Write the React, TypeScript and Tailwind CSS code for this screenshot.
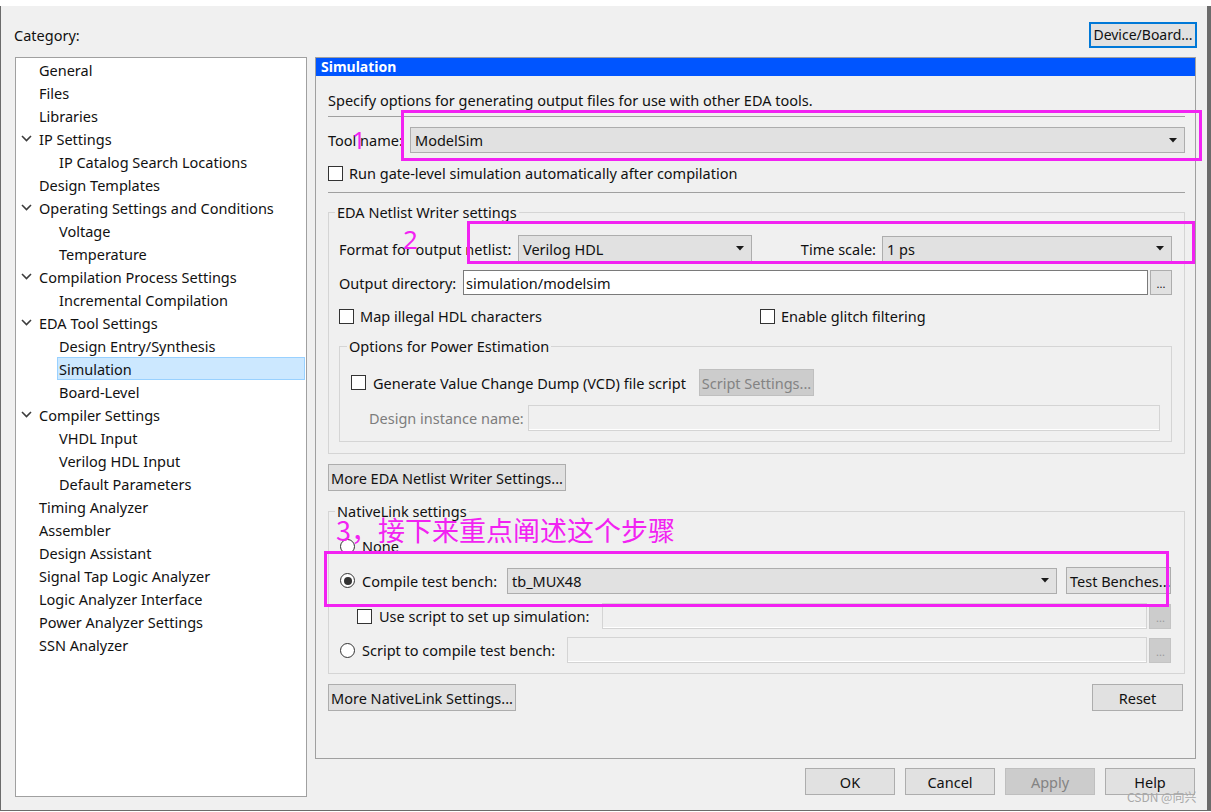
import React from "react";

type TreeItem = { label: string; level: 0 | 1; open?: boolean; selected?: boolean };

const tree: TreeItem[] = [
  { label: "General", level: 0 },
  { label: "Files", level: 0 },
  { label: "Libraries", level: 0 },
  { label: "IP Settings", level: 0, open: true },
  { label: "IP Catalog Search Locations", level: 1 },
  { label: "Design Templates", level: 0 },
  { label: "Operating Settings and Conditions", level: 0, open: true },
  { label: "Voltage", level: 1 },
  { label: "Temperature", level: 1 },
  { label: "Compilation Process Settings", level: 0, open: true },
  { label: "Incremental Compilation", level: 1 },
  { label: "EDA Tool Settings", level: 0, open: true },
  { label: "Design Entry/Synthesis", level: 1 },
  { label: "Simulation", level: 1, selected: true },
  { label: "Board-Level", level: 1 },
  { label: "Compiler Settings", level: 0, open: true },
  { label: "VHDL Input", level: 1 },
  { label: "Verilog HDL Input", level: 1 },
  { label: "Default Parameters", level: 1 },
  { label: "Timing Analyzer", level: 0 },
  { label: "Assembler", level: 0 },
  { label: "Design Assistant", level: 0 },
  { label: "Signal Tap Logic Analyzer", level: 0 },
  { label: "Logic Analyzer Interface", level: 0 },
  { label: "Power Analyzer Settings", level: 0 },
  { label: "SSN Analyzer", level: 0 },
];

function Chevron() {
  return (
    <svg width="11" height="7" viewBox="0 0 11 7" aria-hidden>
      <path d="M1 1 L5.5 5.5 L10 1" fill="none" stroke="#3c3c3c" strokeWidth="1.6" />
    </svg>
  );
}

function Caret() {
  return (
    <svg width="8" height="5" viewBox="0 0 8 5" aria-hidden>
      <path d="M0 0 H8 L4 4.5 Z" fill="#1a1a1a" />
    </svg>
  );
}

function Combo({ value, className = "" }: { value: string; className?: string }) {
  return (
    <div
      className={`flex h-[26px] items-center justify-between border border-[#adadad] bg-[#e1e1e1] pl-[4px] pr-[7px] ${className}`}
    >
      <span>{value}</span>
      <Caret />
    </div>
  );
}

function Check() {
  return <span className="block h-[15px] w-[15px] shrink-0 border border-[#333] bg-white" />;
}

function Radio({ on = false }: { on?: boolean }) {
  return (
    <span className="grid h-[15px] w-[15px] shrink-0 place-items-center rounded-full border border-[#333] bg-white">
      {on ? <span className="block h-[8px] w-[8px] rounded-full bg-[#333]" /> : null}
    </span>
  );
}

function Btn({ children, className = "", disabled = false }: { children: React.ReactNode; className?: string; disabled?: boolean }) {
  return (
    <div
      className={`flex h-[27px] items-center justify-center whitespace-nowrap border ${
        disabled ? "border-[#bfbfbf] bg-[#cccccc] text-[#838383]" : "border-[#adadad] bg-[#e1e1e1]"
      } ${className}`}
    >
      {children}
    </div>
  );
}

function Dots({ disabled = false }: { disabled?: boolean }) {
  return (
    <div
      className={`ml-[2px] flex h-[25px] w-[22px] shrink-0 items-end justify-center border pb-[5px] text-[11px] leading-none ${
        disabled ? "border-[#c4c4c4] bg-[#cccccc] text-[#9a9a9a]" : "border-[#adadad] bg-[#e1e1e1]"
      }`}
    >
      ...
    </div>
  );
}

export default function App() {
  return (
    <div className="relative h-[812px] w-[1211px] overflow-hidden bg-white font-['Noto_Sans',sans-serif] text-[14.5px] leading-[20px] text-[#111]">
      <div className="h-[6px] bg-white" />
      <div className="flex h-[805px] border-b border-l border-r-[4px] border-[#6b6b6b] bg-[#f0f0f0]">
        <div className="flex flex-1 flex-col">
          {/* top row */}
          <div className="flex items-center justify-between pl-[13px] pr-[10px] pt-[16px]">
            <span className="-mt-[1px]">Category:</span>
            <div className="flex h-[26px] w-[108px] items-center justify-center whitespace-nowrap border-2 border-[#0078d7] bg-[#e1e1e1] text-[14px]">
              Device/Board...
            </div>
          </div>

          <div className="mt-[9px] flex">
            {/* tree */}
            <div className="ml-[14px] h-[740px] w-[292px] border border-[#a0a0a0] bg-white">
              {tree.map((t) =>
                t.level === 0 ? (
                  <div key={t.label} className="flex h-[23px] items-center pl-[5px]">
                    <span className="flex w-[18px] items-center">{t.open ? <Chevron /> : null}</span>
                    <span>{t.label}</span>
                  </div>
                ) : (
                  <div key={t.label} className="flex h-[23px] items-stretch pl-[41px] pr-[1px]">
                    <span
                      className={`flex flex-1 items-center px-[2px] ${
                        t.selected ? "border border-[#99d1ff] bg-[#cce8ff] pl-[1px]" : ""
                      }`}
                    >
                      {t.label}
                    </span>
                  </div>
                )
              )}
            </div>

            {/* right column */}
            <div className="ml-[8px] flex w-[881px] flex-col">
              <div className="h-[702px] border border-[#a0a0a0]">
                <div className="h-[18px] bg-[#0055ff] pl-[5px] text-[14px] font-bold leading-[18px] text-white">
                  Simulation
                </div>
                <div className="pl-[12px] pr-[10px]">
                  <div className="mt-[14px] h-[20px]">
                    Specify options for generating output files for use with other EDA tools.
                  </div>
                  <div className="mt-[6px] h-px bg-[#a0a0a0]" />
                  <div className="mt-[10px] flex h-[26px] items-center">
                    <span className="w-[82px] shrink-0">Tool name:</span>
                    <Combo value="ModelSim" className="flex-1" />
                  </div>
                  <div className="mt-[10px] flex h-[20px] items-center gap-[6px]">
                    <Check />
                    <span>Run gate-level simulation automatically after compilation</span>
                  </div>
                  <div className="mt-[9px] h-px bg-[#a0a0a0]" />

                  {/* EDA Netlist Writer settings */}
                  <fieldset className="mt-[9px] border border-[#d5d5d5] pb-[11px] pl-[10px] pr-[12px]">
                    <legend className="-ml-[4px] px-[2px] leading-[20px]">EDA Netlist Writer settings</legend>
                    <div className="mt-[13px] flex h-[27px] items-center">
                      <span className="w-[179px] shrink-0">Format for output netlist:</span>
                      <Combo value="Verilog HDL" className="h-[27px] w-[234px] shrink-0" />
                      <span className="w-[130px] shrink-0 pr-[6px] text-right">Time scale:</span>
                      <Combo value="1 ps" className="flex-1" />
                    </div>
                    <div className="mt-[8px] flex h-[25px] items-center">
                      <span className="w-[124px] shrink-0">Output directory:</span>
                      <div className="flex h-[25px] flex-1 items-center border border-[#7a7a7a] bg-white pl-[2px]">
                        simulation/modelsim
                      </div>
                      <Dots />
                    </div>
                    <div className="mt-[11px] flex h-[20px] items-center">
                      <div className="flex w-[421px] items-center gap-[6px]">
                        <Check />
                        <span>Map illegal HDL characters</span>
                      </div>
                      <div className="flex items-center gap-[6px]">
                        <Check />
                        <span>Enable glitch filtering</span>
                      </div>
                    </div>

                    <fieldset className="mt-[10px] border border-[#d5d5d5] pb-[10px] pl-[11px] pr-[11px]">
                      <legend className="-ml-[4px] px-[2px] leading-[20px]">Options for Power Estimation</legend>
                      <div className="mt-[13px] flex h-[27px] items-center">
                        <div className="flex w-[348px] items-center gap-[7px]">
                          <Check />
                          <span>Generate Value Change Dump (VCD) file script</span>
                        </div>
                        <Btn disabled className="w-[115px]">
                          Script Settings...
                        </Btn>
                      </div>
                      <div className="mt-[9px] flex h-[26px] items-center">
                        <span className="w-[177px] shrink-0 whitespace-nowrap pl-[18px] text-[#7d7d7d]">Design instance name:</span>
                        <div className="h-[26px] flex-1 border border-[#d4d4d4] bg-[#f0f0f0] shadow-[inset_0_-1px_0_#fff]" />
                      </div>
                    </fieldset>
                  </fieldset>

                  <Btn className="mt-[10px] w-[238px]">More EDA Netlist Writer Settings...</Btn>

                  {/* NativeLink settings */}
                  <fieldset className="mt-[10px] border border-[#d5d5d5] pb-[10px] pl-[11px] pr-[13px]">
                    <legend className="-ml-[5px] px-[2px] leading-[20px]">NativeLink settings</legend>
                    <div className="mt-[15px] flex h-[20px] items-center gap-[7px]">
                      <Radio />
                      <span>None</span>
                    </div>
                    <div className="mt-[11px] flex h-[27px] items-center">
                      <div className="flex w-[167px] shrink-0 items-center gap-[7px]">
                        <Radio on />
                        <span>Compile test bench:</span>
                      </div>
                      <Combo value="tb_MUX48" className="w-[550px] shrink-0" />
                      <Btn className="ml-[9px] flex-1 justify-start overflow-hidden pl-[3px]">Test Benches...</Btn>
                    </div>
                    <div className="mt-[9px] flex h-[26px] items-center">
                      <div className="flex w-[262px] shrink-0 items-center gap-[7px] pl-[17px]">
                        <Check />
                        <span className="whitespace-nowrap">Use script to set up simulation:</span>
                      </div>
                      <div className="h-[26px] flex-1 border border-[#d4d4d4] bg-[#f0f0f0] shadow-[inset_0_-1px_0_#fff]" />
                      <Dots disabled />
                    </div>
                    <div className="mt-[8px] flex h-[26px] items-center">
                      <div className="flex w-[227px] shrink-0 items-center gap-[7px]">
                        <Radio />
                        <span className="whitespace-nowrap">Script to compile test bench:</span>
                      </div>
                      <div className="h-[26px] flex-1 border border-[#d4d4d4] bg-[#f0f0f0] shadow-[inset_0_-1px_0_#fff]" />
                      <Dots disabled />
                    </div>
                  </fieldset>

                  <div className="mt-[10px] flex items-center justify-between pr-[2px]">
                    <Btn className="w-[188px]">More NativeLink Settings...</Btn>
                    <Btn className="w-[91px]">Reset</Btn>
                  </div>
                </div>
              </div>

              <div className="mt-[9px] flex justify-end gap-[10px] pr-[1px]">
                <Btn className="w-[90px]">OK</Btn>
                <Btn className="w-[90px]">Cancel</Btn>
                <Btn disabled className="w-[90px] border-[#adadad]">
                  Apply
                </Btn>
                <Btn className="w-[90px]">Help</Btn>
              </div>
            </div>
          </div>
        </div>
      </div>

      {/* annotations drawn over the dialog */}
      <div className="pointer-events-none absolute left-[401px] top-[110px] h-[51px] w-[801px] border-[3px] border-[#f222f2]" />
      <div className="pointer-events-none absolute left-[352px] top-[125px] text-[24px] leading-[30px] text-[#f222f2]">1</div>
      <div className="pointer-events-none absolute left-[467px] top-[221px] h-[43px] w-[728px] border-[3px] border-[#f222f2]" />
      <div className="pointer-events-none absolute left-[403px] top-[224px] text-[26px] leading-[30px] text-[#f222f2]">2</div>
      <div className="pointer-events-none absolute left-[324px] top-[551px] h-[56px] w-[845px] border-[3px] border-[#f222f2]" />
      <div className="pointer-events-none absolute left-[336px] top-[512px] font-['Noto_Sans_CJK_SC',sans-serif] text-[27px] leading-[36px] text-[#f222f2]">
        3，接下来重点阐述这个步骤
      </div>
      <div className="pointer-events-none absolute left-[1127px] top-[789px] font-['Noto_Sans_CJK_SC',sans-serif] text-[12px] leading-[16px] text-[#a8a8a8]">
        CSDN @向兴
      </div>
    </div>
  );
}
